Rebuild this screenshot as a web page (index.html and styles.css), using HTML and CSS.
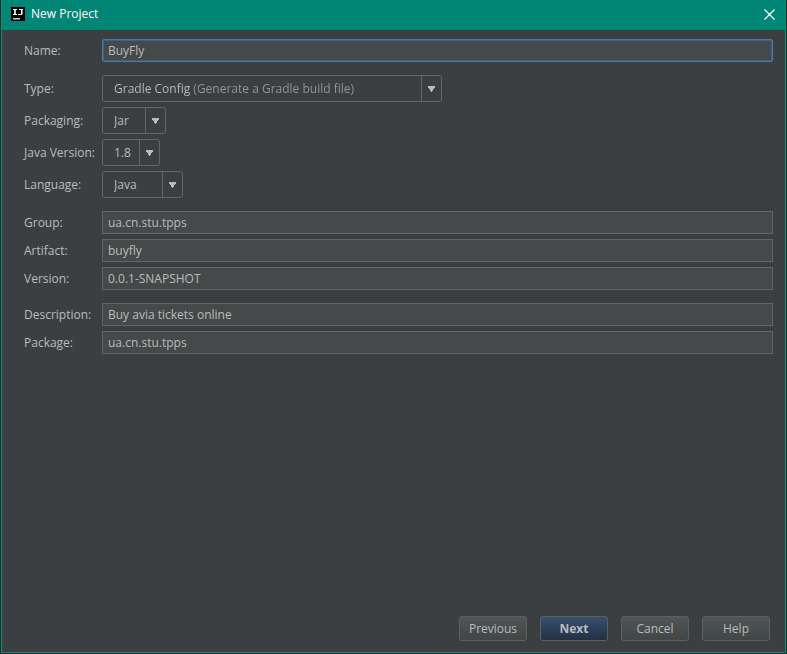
FILE: index.html
```html
<!DOCTYPE html>
<html lang="en">
<head>
<meta charset="utf-8">
<title>New Project</title>
<link rel="stylesheet" href="styles.css">
</head>
<body>
<main class="dialog">
  <header class="titlebar">
    <svg class="logo" viewBox="0 0 14 14" aria-hidden="true">
      <rect width="14" height="14" fill="#000"/>
      <path d="M2 2.500h4M2 7.500h4M8 2.500h4M7 7.500h3.500" stroke="#fff"/>
      <path d="M4 2v6M10.800 2v4.500q0 1-1 1" fill="none" stroke="#fff" stroke-width="1.600"/>
      <path d="M2 11.800h7" stroke="#fff" stroke-width="1.200"/>
    </svg>
    <h1 class="title">New Project</h1>
    <button class="close" type="button" aria-label="Close">
      <svg viewBox="0 0 11 11" aria-hidden="true"><path d="M.5.500l10 10M10.500.500l-10 10" stroke="#fff" stroke-width="1.300"/></svg>
    </button>
  </header>
  <form class="form">
    <div class="group">
      <div class="row"><label for="name">Name:</label><input class="field focused" id="name" type="text" value="BuyFly" spellcheck="false"></div>
    </div>
    <div class="group">
      <div class="row"><label for="type">Type:</label>
        <div class="combo combo-type"><select class="annotated" id="type"><option>Gradle Config (Generate a Gradle build file)</option></select></div></div>
      <div class="row"><label for="packaging">Packaging:</label>
        <div class="combo combo-packaging"><select id="packaging"><option>Jar</option></select></div></div>
      <div class="row"><label for="java">Java Version:</label>
        <div class="combo combo-java"><select id="java"><option>1.8</option></select></div></div>
      <div class="row"><label for="language">Language:</label>
        <div class="combo combo-language"><select id="language"><option>Java</option></select></div></div>
    </div>
    <div class="group">
      <div class="row"><label for="group">Group:</label><input class="field" id="group" type="text" value="ua.cn.stu.tpps" spellcheck="false"></div>
      <div class="row"><label for="artifact">Artifact:</label><input class="field" id="artifact" type="text" value="buyfly" spellcheck="false"></div>
      <div class="row"><label for="version">Version:</label><input class="field" id="version" type="text" value="0.0.1-SNAPSHOT" spellcheck="false"></div>
    </div>
    <div class="group">
      <div class="row"><label for="description">Description:</label><input class="field" id="description" type="text" value="Buy avia tickets online" spellcheck="false"></div>
      <div class="row"><label for="package">Package:</label><input class="field" id="package" type="text" value="ua.cn.stu.tpps" spellcheck="false"></div>
    </div>
  </form>
  <footer class="actions">
    <button class="button" type="button">Previous</button>
    <button class="button primary" type="button">Next</button>
    <button class="button" type="button">Cancel</button>
    <button class="button" type="button">Help</button>
  </footer>
</main>
</body>
</html>
```
FILE: styles.css
```css
* {
  box-sizing: border-box;
}

body {
  margin: 0;
  padding: 0 1px 1px;
  min-height: 100vh;
  display: flex;
  background: #252b2e;
  color: #bbbbbb;
  font: 12px/16px "Open Sans", "Noto Sans", sans-serif;
}

input,
select,
button {
  margin: 0;
  font: inherit;
  color: inherit;
}

.dialog {
  flex: 1;
  display: flex;
  flex-direction: column;
  background: #3c3f41;
  border: 1px solid #118a79;
  border-top: 0;
}

.titlebar {
  height: 30px;
  display: flex;
  align-items: center;
  gap: 6px;
  padding: 0 10px 2px 9px;
  background: #018574;
  color: #fff;
}

.logo {
  width: 14px;
  height: 14px;
}

.title {
  flex: 1;
  margin: 0;
  font-size: 12px;
  font-weight: 400;
}

.close {
  display: flex;
  padding: 0;
  border: 0;
  background: none;
}

.close svg {
  width: 11px;
  height: 11px;
}

.form {
  flex: 1;
  display: flex;
  flex-direction: column;
  gap: 13px;
  padding: 9px 12px 9px 22px;
}

.group {
  display: flex;
  flex-direction: column;
  gap: 5px;
}

.row {
  display: grid;
  grid-template-columns: 78px 1fr;
  align-items: center;
}

.field {
  width: 100%;
  height: 23px;
  padding: 0 5px;
  border: 1px solid #646464;
  border-radius: 0;
  background: #45494a;
  outline: 0;
}

.focused {
  border-color: #4a79ad;
  border-radius: 2px;
  box-shadow: inset 0 0 0 1px #435f80;
}

.combo {
  display: grid;
  grid-template-columns: 1fr 20px;
  height: 27px;
  border: 1px solid #646464;
  border-radius: 3px;
}

.combo::after {
  content: "";
  grid-area: 1 / 2;
  border-left: 1px solid #646464;
  background: conic-gradient(from -34deg at 50% 100%, #bbbbbb 68deg, transparent 0) center / 9px 6px no-repeat;
  pointer-events: none;
}

.combo select {
  grid-area: 1 / 1 / 2 / 3;
  min-width: 0;
  padding: 0 20px 0 11px;
  border: 0;
  outline: 0;
  appearance: none;
  background: none;
}

.combo .annotated {
  background: linear-gradient(90deg, #bbbbbb 88px, #969696 0);
  background-clip: text;
  -webkit-text-fill-color: transparent;
}

.combo-type { width: 340px; }
.combo-packaging { width: 64px; }
.combo-java { width: 58px; }
.combo-language { width: 81px; }

.actions {
  display: flex;
  justify-content: flex-end;
  gap: 13px;
  padding: 0 15px 11px;
}

.button {
  width: 68px;
  height: 25px;
  padding: 0;
  border: 1px solid #5e6060;
  border-radius: 3px;
  background: linear-gradient(#4f5556, #414646);
}

.primary {
  background: linear-gradient(#385070, #233043);
  font-weight: 700;
}
```
